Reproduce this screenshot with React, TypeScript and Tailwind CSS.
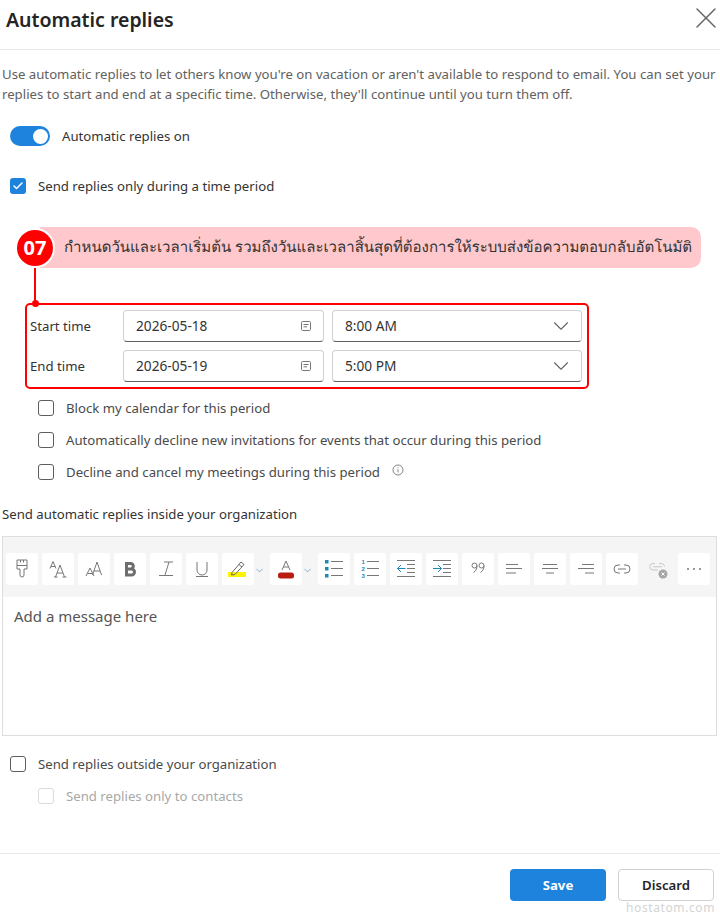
import React from "react";
import { X, ChevronDown, Check } from "lucide-react";

const font = "font-['Noto_Sans','Noto_Sans_CJK_SC',sans-serif]";

function Box({ checked, disabled }: { checked?: boolean; disabled?: boolean }) {
  if (checked)
    return (
      <span className="w-4 h-4 rounded-[3px] bg-[#1e83dc] flex items-center justify-center shrink-0">
        <Check size={12} strokeWidth={3} className="text-white" />
      </span>
    );
  return (
    <span
      className={`w-4 h-4 rounded-[3px] border shrink-0 bg-white ${
        disabled ? "border-[#dcdcdc]" : "border-[#605e5c]"
      }`}
    />
  );
}

function Row({
  text,
  className,
  checked,
  disabled,
  extra,
}: {
  text: string;
  className: string;
  checked?: boolean;
  disabled?: boolean;
  extra?: React.ReactNode;
}) {
  return (
    <div className={`flex items-center gap-3 h-5 ${className}`}>
      <Box checked={checked} disabled={disabled} />
      <span className={`text-[13.2px] leading-5 whitespace-nowrap ${disabled ? "text-[#a8a8a8]" : "text-[#4a4a4a]"}`}>
        {text}
      </span>
      {extra}
    </div>
  );
}

function Field({ value, kind, w }: { value: string; kind: "date" | "time"; w: string }) {
  return (
    <div
      className={`${w} h-8 flex items-center justify-between pl-3 rounded-[4px] border border-[#d0d0d0] border-b-[#616161] bg-white`}
    >
      <span className="text-[13.7px] leading-5 text-[#333]">{value}</span>
      {kind === "date" ? (
        <svg width="12" height="12" viewBox="0 0 12 12" className="mr-[11px]" fill="none" stroke="#777" strokeWidth="1">
          <rect x="1.5" y="1.5" width="9" height="9" rx="1.2" />
          <path d="M3.5 4.5h5M3.5 6.8h3.5" />
        </svg>
      ) : (
        <ChevronDown size={26} strokeWidth={1} className="text-[#666] mr-[7px]" />
      )}
    </div>
  );
}

function Tool({ children, plain }: { children: React.ReactNode; plain?: boolean }) {
  return (
    <span className={`w-8 h-8 rounded-[2px] flex items-center justify-center shrink-0 ${plain ? "" : "bg-white"}`}>
      <svg width="32" height="32" viewBox="0 0 32 32" fill="none" stroke="#777" strokeWidth="1">
        {children}
      </svg>
    </span>
  );
}

const Small = () => <ChevronDown size={11} strokeWidth={1.2} className="text-[#2a7ab8] mr-[5px] shrink-0 mt-1" />;

const Digit = ({ y, n }: { y: number; n: string }) => (
  <text x="7.5" y={y} fontSize="6" fontWeight="600" fill="#1f87b8" stroke="none" fontFamily="Liberation Sans, sans-serif">
    {n}
  </text>
);

export default function App() {
  return (
    <div className={`${font} w-[720px] h-[916px] bg-white overflow-hidden flex flex-col relative`}>
      <header className="h-[50px] shrink-0 border-b border-[#e8e8e8] flex items-center justify-between pl-[6px] pr-0">
        <h1 className="text-[19.5px] font-semibold text-[#242424] relative -top-[5px]">Automatic replies</h1>
        <X size={36} strokeWidth={1} className="text-[#666] relative -top-[7px] -mr-1" />
      </header>

      <p className="mt-[14px] ml-[2px] w-[716px] text-[13.2px] leading-5 text-[#616161] whitespace-nowrap">
        Use automatic replies to let others know you're on vacation or aren't available to respond to email. You can set your
        <br />
        replies to start and end at a specific time. Otherwise, they'll continue until you turn them off.
      </p>

      <div className="mt-[22px] ml-[10px] flex items-center gap-3 h-5">
        <span className="w-10 h-5 rounded-full bg-[#1e83dc] flex items-center justify-end pr-[2px]">
          <span className="w-[15px] h-[15px] rounded-full bg-white" />
        </span>
        <span className="text-[13.2px] leading-5 text-[#333]">Automatic replies on</span>
      </div>

      <Row text="Send replies only during a time period" checked className="mt-[30px] ml-[10px] [&>span:last-child]:text-[#333]" />

      <div className="mt-[31px] ml-[17px] flex items-center h-[41px] relative w-[684px]">
        <div className="absolute left-[23px] right-0 top-0 h-[41px] rounded-r-[10px] bg-[#fec8cc]" />
        <div className="relative z-10 w-9 h-9 rounded-full bg-[#ff0000] ring-2 ring-white flex items-center justify-center text-white font-bold text-[20px] leading-none">
          07
        </div>
        <span className="relative z-10 ml-[11px] text-[15px] text-[#333] whitespace-nowrap [text-rendering:geometricPrecision] font-['Noto_Sans','Liberation_Sans',sans-serif]">
          กำหนดวันและเวลาเริ่มต้น รวมถึงวันและเวลาสิ้นสุดที่ต้องการให้ระบบส่งข้อความตอบกลับอัตโนมัติ
        </span>
        <span className="absolute left-[17px] top-[41px] w-[2px] h-[36px] bg-[#ff0000]" />
        <span className="absolute left-[15px] top-[73px] w-[7px] h-[7px] rounded-full bg-[#ff0000] z-10" />
      </div>

      <div className="mt-[35px] ml-[25px] w-[564px] h-[86px] rounded-[5px] border-2 border-[#ff0000] flex flex-col gap-2 pt-[5px] pl-[3px] shrink-0">
        <div className="flex items-center h-8">
          <span className="w-[93px] text-[13.2px] leading-5 text-[#333]">Start time</span>
          <Field value="2026-05-18" kind="date" w="w-[201px]" />
          <Field value="8:00 AM" kind="time" w="w-[250px] ml-2" />
        </div>
        <div className="flex items-center h-8">
          <span className="w-[93px] text-[13.2px] leading-5 text-[#333]">End time</span>
          <Field value="2026-05-19" kind="date" w="w-[201px]" />
          <Field value="5:00 PM" kind="time" w="w-[250px] ml-2" />
        </div>
      </div>

      <Row text="Block my calendar for this period" className="mt-[9px] ml-[38px]" />
      <Row text="Automatically decline new invitations for events that occur during this period" className="mt-3 ml-[38px]" />
      <Row
        text="Decline and cancel my meetings during this period"
        className="mt-3 ml-[38px]"
        extra={
          <svg width="12" height="12" viewBox="0 0 12 12" fill="none" stroke="#666" strokeWidth="0.8" className="-mt-1">
            <circle cx="6" cy="6" r="5" />
            <path d="M6 5.2v3.2M6 3.2v.9" />
          </svg>
        }
      />

      <div className="mt-[22px] ml-[2px] text-[13.2px] leading-5 text-[#333]">Send automatic replies inside your organization</div>

      <div className="mt-3 ml-[2px] w-[715px] h-[200px] border border-[#dedede] shrink-0 flex flex-col">
        <div className="h-[60px] bg-[#f5f5f5] flex items-center gap-1 pl-[3px] pt-[3px] shrink-0">
          <Tool>
            <path d="M11 7h10v9h-3v6a2 2 0 0 1-4 0v-6h-3zM11 12.5h10M14.5 7v2.5M17.5 7v2.5" />
          </Tool>
          <Tool>
            <path d="M8 15.5l3-7 3 7M9 13.5h4M13.5 24l4.5-12 4.5 12M15 20h6M12 24h3.5M20.5 24h4" />
          </Tool>
          <Tool>
            <path d="M8 23l4-8 4 8M9.5 20.5h5M14.5 22l4.5-13 4.5 13M16 18h6" />
          </Tool>
          <Tool>
            <path d="M12.5 10.5h4.5a2.8 2.8 0 0 1 0 5.5h-4.5zM12.5 16h5a3 3 0 0 1 0 6h-5z" strokeWidth="3" stroke="#6e6e6e" />
          </Tool>
          <Tool>
            <path d="M14 9h9M19 9l-4 13M9 22.5h14" />
          </Tool>
          <Tool>
            <path d="M11 9v8a5 5 0 0 0 10 0V9M10 23.5h12" />
          </Tool>
          <div className="flex items-center">
            <Tool>
              <rect x="6" y="19" width="18" height="5" fill="#fff200" stroke="none" />
              <path d="M10 19.5l9-10.5 3 2.5-9 10-3.5.5zM17 11.5l3 2.5" stroke="#666" />
            </Tool>
            <Small />
          </div>
          <div className="flex items-center -ml-[4px]">
            <Tool>
              <path d="M12 17l4-9 4 9M13.5 14h5" />
              <rect x="8" y="19.5" width="16" height="6" rx="2.5" fill="#b91c10" stroke="none" />
            </Tool>
            <Small />
          </div>
          <div className="-ml-[4px] flex gap-1">
            <Tool>
              <path d="M13 8.5h12M13 15.5h12M13 22.5h12" />
              <path d="M7 7h3.5v3.5H7zM7 14h3.5v3.5H7zM7 21h3.5v3.5H7z" fill="#1f87b8" stroke="none" />
            </Tool>
            <Tool>
              <path d="M13 8.5h12M13 15.5h12M13 22.5h12" />
              <Digit y={11} n="1" />
              <Digit y={18} n="2" />
              <Digit y={25} n="3" />
            </Tool>
            <Tool>
              <path d="M7 7.5h18M17 11.5h8M17 15.5h8M17 19.5h8M7 23.5h18" />
              <path d="M15.5 15.5H7.5M11 12l-3.5 3.5L11 19" stroke="#1f87b8" />
            </Tool>
            <Tool>
              <path d="M7 7.5h18M17 11.5h8M17 15.5h8M17 19.5h8M7 23.5h18" />
              <path d="M7 15.5h8.5M12 12l3.5 3.5L12 19" stroke="#1f87b8" />
            </Tool>
            <Tool>
              <circle cx="12.5" cy="12.5" r="2.5" />
              <circle cx="19.5" cy="12.5" r="2.5" />
              <path d="M15 12.5c0 3-1 5.500-3.500 7M22 12.500c0 3-1 5.500-3.500 7" />
            </Tool>
            <Tool>
              <path d="M8 11.500h12M8 15.500h16M8 20h10" />
            </Tool>
            <Tool>
              <path d="M9 11.500h14M8 15.500h16M12 20h8" />
            </Tool>
            <Tool>
              <path d="M12 11.500h12M8 15.500h16M15 20h9" />
            </Tool>
            <Tool>
              <path d="M14 12h-2a4 4 0 0 0 0 8h2M18 12h2a4 4 0 0 1 0 8h-2M12 16h8" />
            </Tool>
            <Tool plain>
              <g stroke="#c8c8c8">
                <path d="M13 10.500h-2a3.200 3.200 0 0 0 0 6.500h5M17 10.500h2.500a3.200 3.200 0 0 1 3 3M11 13.800h9" />
              </g>
              <circle cx="21" cy="21" r="4.500" fill="#a6a6a6" stroke="none" />
              <path d="M19.500 19.500l3 3M22.500 19.500l-3 3" stroke="#fff" />
            </Tool>
            <Tool>
              <circle cx="10" cy="16" r="1" fill="#777" stroke="none" />
              <circle cx="16" cy="16" r="1" fill="#777" stroke="none" />
              <circle cx="22" cy="16" r="1" fill="#777" stroke="none" />
            </Tool>
          </div>
        </div>
        <div className="pl-[11px] pt-[9px] text-[15px] leading-5 text-[#555]">Add a message here</div>
      </div>

      <Row text="Send replies outside your organization" className="mt-[18px] ml-[10px]" />
      <Row text="Send replies only to contacts" disabled className="mt-3 ml-[38px]" />

      <div className="mt-[47px] h-[63px] border-t border-[#e8e8e8] flex justify-end items-start gap-3 pt-[15px] pr-[6px]">
        <button className="w-24 h-8 pt-[1px] rounded-[4px] bg-[#1e83dc] text-white text-[13.2px] font-bold">Save</button>
        <button className="w-24 h-8 pt-[1px] rounded-[4px] border border-[#d1d1d1] bg-white text-[#242424] text-[13.2px] font-semibold">Discard</button>
      </div>
      <span className="absolute right-[5px] bottom-0 text-[12px] leading-4 tracking-[0.6px] text-[#d4d4d4]">hostatom.com</span>
    </div>
  );
}
